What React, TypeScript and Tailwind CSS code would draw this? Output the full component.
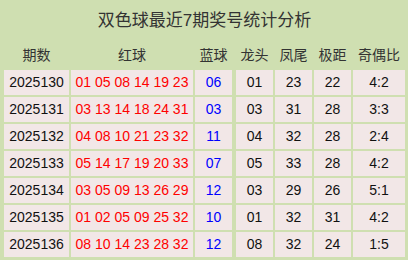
import React from 'react';

interface DrawRow {
  issue: string;
  reds: string;
  blue: string;
  head: string;
  tail: string;
  span: string;
  ratio: string;
}

const rows: DrawRow[] = [
  { issue: '2025130', reds: '01 05 08 14 19 23', blue: '06', head: '01', tail: '23', span: '22', ratio: '4:2' },
  { issue: '2025131', reds: '03 13 14 18 24 31', blue: '03', head: '03', tail: '31', span: '28', ratio: '3:3' },
  { issue: '2025132', reds: '04 08 10 21 23 32', blue: '11', head: '04', tail: '32', span: '28', ratio: '2:4' },
  { issue: '2025133', reds: '05 14 17 19 20 33', blue: '07', head: '05', tail: '33', span: '28', ratio: '4:2' },
  { issue: '2025134', reds: '03 05 09 13 26 29', blue: '12', head: '03', tail: '29', span: '26', ratio: '5:1' },
  { issue: '2025135', reds: '01 02 05 09 25 32', blue: '10', head: '01', tail: '32', span: '31', ratio: '4:2' },
  { issue: '2025136', reds: '08 10 14 23 28 32', blue: '12', head: '08', tail: '32', span: '24', ratio: '1:5' },
];

const headers = ['期数', '红球', '蓝球', '龙头', '凤尾', '极距', '奇偶比'];

const cell = 'flex h-[25px] items-center justify-center bg-[#f2e7e7] text-[14px]';

export default function App() {
  return (
    <div className="h-[262px] w-[408px] bg-white font-['Liberation_Sans','Noto_Sans_CJK_SC',sans-serif]">
      <div className="h-[260px] w-[408px] bg-[#cfdfb1] pb-[3px] pl-[4px] pr-[3px]">
        <div className="flex h-[42px] items-center justify-center text-[17px] text-[#333]">
          双色球最近7期奖号统计分析
        </div>
        <div className="grid grid-cols-[65px_122px_39px_37px_37px_37px_52px] gap-[2px]">
          {headers.map((h, i) => (
            <div
              key={h}
              className={`flex h-[26px] items-center justify-center text-[14px] text-[#333] ${i === 2 ? 'mr-[2px]' : ''}`}
            >
              {h}
            </div>
          ))}
          {rows.map((r) => (
            <React.Fragment key={r.issue}>
              <div className={`${cell} text-[#111]`}>{r.issue}</div>
              <div className={`${cell} text-[#ff0000]`}>{r.reds}</div>
              <div className={`${cell} mr-[2px] text-[#0000ff]`}>{r.blue}</div>
              <div className={`${cell} text-[#111]`}>{r.head}</div>
              <div className={`${cell} text-[#111]`}>{r.tail}</div>
              <div className={`${cell} text-[#111]`}>{r.span}</div>
              <div className={`${cell} text-[#111]`}>{r.ratio}</div>
            </React.Fragment>
          ))}
        </div>
      </div>
    </div>
  );
}
